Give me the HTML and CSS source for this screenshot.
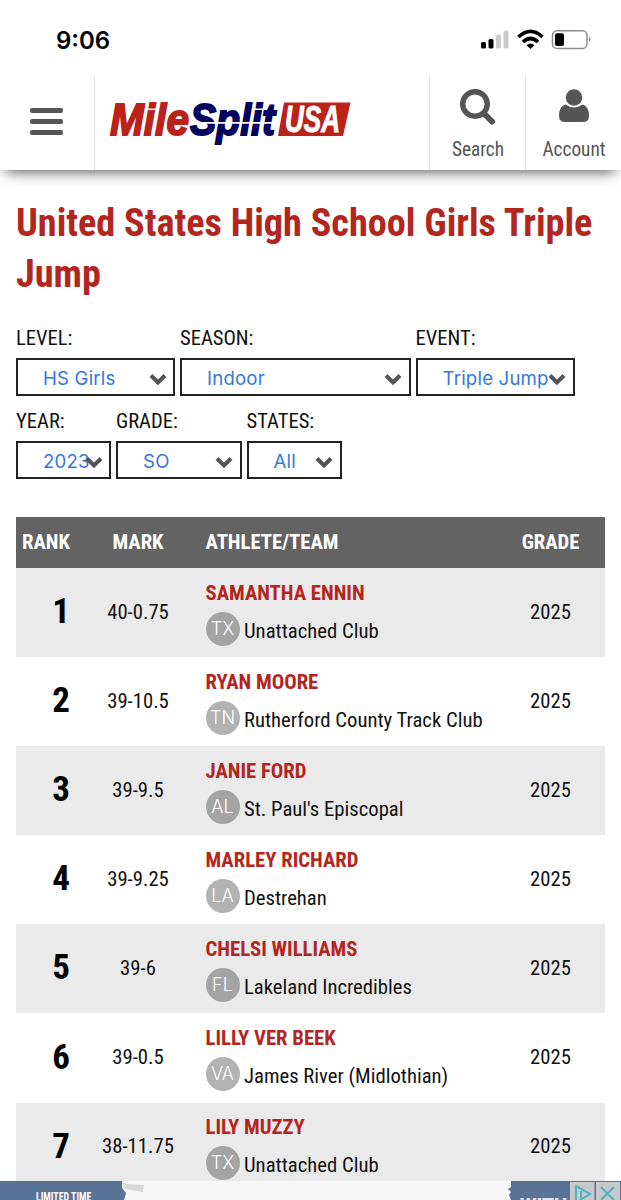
FILE: index.html
```html
<!DOCTYPE html>
<html lang="en">
<head>
<meta charset="utf-8">
<title>MileSplit USA</title>
<link rel="stylesheet" href="styles.css">
</head>
<body>
<header class="top">
  <div class="status">
    <span class="time">9:06</span>
    <svg class="status-icons" width="112" height="22" viewBox="0 0 112 22">
      <rect x="1" y="13" width="5" height="6.500" rx="1.5"/><rect x="8.500" y="10" width="5" height="9.500" rx="1.5"/>
      <rect x="16" y="5.500" width="5" height="14" rx="1.5" fill="#ccc"/><rect x="23.500" y="1.500" width="5" height="18" rx="1.500" fill="#ccc"/>
      <g fill="none" stroke="#000" stroke-width="3.600"><path d="M38.500 7.900Q50.500 -3.200 62.500 7.900"/><path d="M43 13Q50.500 6 58 13"/></g>
      <path d="M46.500 16.200Q50.500 12.600 54.500 16.200L50.500 20Z"/>
      <rect x="72.500" y="1.800" width="34.500" height="17.600" rx="4.500" fill="#fff" stroke="#8c8c8c" stroke-width="1.500"/>
      <rect x="75" y="4.200" width="9" height="12.800" rx="2"/>
      <path d="M109 7.500Q112 10.500 109 13.300Z" fill="#8c8c8c"/>
    </svg>
  </div>
  <nav class="nav">
    <button class="menu" aria-label="Menu"><i></i><i></i><i></i></button>
    <a class="brand">
      <svg width="245" height="50" viewBox="0 0 245 50">
        <g class="logo-text">
          <text x="1" y="38" textLength="79" lengthAdjust="spacingAndGlyphs" fill="#bb2219" stroke="#bb2219">Mile</text>
          <text x="81" y="38" textLength="85" lengthAdjust="spacingAndGlyphs" fill="#03005f" stroke="#03005f">Split</text>
        </g>
        <path d="M94 25.800H170" stroke="#fff" stroke-width="1.800"/>
        <path d="M175 5.500H241.500L234 39H169Z" fill="#bb2219"/>
        <text class="logo-usa" x="176" y="34.500" textLength="55" lengthAdjust="spacingAndGlyphs">USA</text>
      </svg>
    </a>
    <a class="tool">
      <svg width="38" height="38" viewBox="0 0 38 38" fill="none" stroke="#555"><circle cx="16" cy="15" r="12.300" stroke-width="5.400"/><path d="M25.500 25L33 32.500" stroke-width="6" stroke-linecap="round"/></svg>
      <span class="rc">Search</span>
    </a>
    <a class="tool">
      <svg width="38" height="38" viewBox="0 0 38 38" fill="#555"><circle cx="19" cy="8.500" r="8.300"/><path d="M10.500 15.500Q19 21.500 27.500 15.500Q34 17 34 27Q34 33 28 33H10Q4 33 4 27Q4 17 10.500 15.500Z"/></svg>
      <span class="rc">Account</span>
    </a>
  </nav>
</header>
<main>
  <h1><span class="rc">United States High School Girls Triple</span><br><span class="rc">Jump</span></h1>
  <form class="filters" id="filters"></form>
  <section class="table" id="table">
    <div class="row head"><span class="rank"><span class="rc">RANK</span></span><span class="mark"><span class="rc">MARK</span></span><span class="who"><span class="rc">ATHLETE/TEAM</span></span><span class="grade"><span class="rc">GRADE</span></span></div>
  </section>
</main>
<aside class="ad">
  <div class="ad-left"><span>LIMITED TIME</span></div>
  <svg class="ad-paper" width="389" height="19" viewBox="0 0 389 19"><path d="M0 0H389V6L386 8L389 11L387 14L389 19H2L4 12L0 7Z" fill="#f7f7f8"/><path d="M0 1L5 3L22 4L21 11L3 8Z" fill="#d8d8d8"/></svg>
  <div class="ad-right"><span>WITH</span></div>
  <svg class="ad-controls" width="51" height="19" viewBox="0 0 51 19"><rect y="1" width="24.500" height="18" fill="#c7c9cc"/><rect x="26" y="1" width="24" height="18" fill="#c7c9cc"/><g fill="none" stroke="#48b4c8" stroke-width="2"><path d="M6 19V5L20 13L10 19M11 10V17"/><path d="M31 6L44 19M44 6L31 19"/></g></svg>
</aside>
<script src="app.js"></script>
</body>
</html>
```
FILE: styles.css
```css
* { box-sizing: border-box; }
body { margin: 0; height: 1200px; overflow: hidden; background: #fff; color: #111; font-family: Roboto, sans-serif; position: relative; }
.rc { display: inline-block; font-family: "Roboto Condensed", Roboto, sans-serif; font-stretch: 75%; white-space: nowrap; }
.top { height: 170px; background: #fff; box-shadow: 0 8px 13px -6px rgba(0,0,0,.65); }
.status { height: 75px; display: flex; justify-content: space-between; padding: 25px 29px 0 56px; }
.time { font: 600 24px/31px Inter, sans-serif; color: #000; }
.status-icons { margin-top: 4px; }
.nav { height: 95px; display: flex; }
.menu { width: 95.500px; border: 0; border-right: 1.500px solid #e3e3e3; background: none; padding: 33px 0 0 30px; display: flex; flex-direction: column; gap: 5.700px; }
.menu i { width: 33px; height: 5.300px; border-radius: 2px; background: #555; flex: none; }
.brand { width: 334.500px; padding: 22px 0 0 13.500px; }
.brand svg { display: block; overflow: visible; }
.logo-text { font: italic bold 45px "Liberation Sans", sans-serif; stroke-width: 1.800px; }
.logo-usa { font: italic bold 36px "Liberation Sans", sans-serif; fill: #fff; stroke: #fff; stroke-width: 1px; }
.tool { width: 96px; border-left: 1.500px solid #e3e3e3; display: flex; flex-direction: column; align-items: center; padding: 14px 0 0 1px; font-size: 19.300px; line-height: 24px; color: #555; flex: none; }
.tool svg { margin-bottom: 11px; }
main { padding: 28px 16px 0; }
h1 { margin: 0; color: #b3261e; font-size: 38.250px; line-height: 51px; font-weight: 700; height: 126px; }
.filters { display: flex; flex-wrap: wrap; gap: 0 5px; height: 193px; align-content: flex-start; }
.field { height: 83px; font-size: 20.600px; }
.field .rc { display: block; line-height: 28px; height: 34px; }
.select { height: 38px; border: 2px solid #222; padding-left: 25px; font: 18.600px/36px Inter, sans-serif; letter-spacing: .2px; color: #3478dc; white-space: nowrap; position: relative; }
.select svg { position: absolute; right: 6.500px; top: 12.500px; }
.row { height: 89.100px; display: flex; align-items: center; font-size: 20.700px; }
.row .rc { position: relative; top: -1px; }
.row:nth-child(even) { background: #eaeaea; }
.head { height: 51px; background: #636363; color: #fff; font-weight: 700; }
.rank { width: 61px; padding-left: 6px; }
.row:not(.head) .rank { text-align: right; padding: 0 7px 0 0; font-size: 35px; font-weight: 700; color: #000; }
.mark { width: 122px; text-align: center; }
.who { width: 297px; padding-left: 6.500px; }
.grade { width: 109px; text-align: center; }
.name { color: #b3261e; font-weight: 700; line-height: 28px; padding-top: 9px; }
.team { display: flex; height: 47px; gap: 4.500px; line-height: 48px; }
.badge { width: 34px; height: 34px; border-radius: 50%; margin-top: 4px; background: #a4a4a4; color: #fff; text-align: center; font: 300 18px/34px Inter, sans-serif; }
.row:nth-child(odd) .badge { background: #b2b2b2; }
.ad { position: absolute; top: 1181px; left: 0; width: 621px; height: 19px; background: #587396; display: flex; overflow: hidden; }
.ad-left { width: 122px; padding: 9px 0 0 36px; color: #fff; font: 700 12px/14px "Roboto Condensed", Roboto; font-stretch: 75%; white-space: nowrap; }
.ad-left span { display: inline-block; transform: scaleX(.82); transform-origin: left; }
.ad-paper { flex: none; }
.ad-right { width: 59px; padding: 13px 0 0 9px; color: #e4e4e4; font: 900 19px/22px Roboto; }
.ad-controls { flex: none; }
```
FILE: app.js
```js
const chevron = '<svg width="18" height="13" viewBox="0 0 18 13"><path d="M2 2.500L9 9.500L16 2.500" fill="none" stroke="#555" stroke-width="4"/></svg>';
const fields = [["LEVEL:", "HS Girls", 159], ["SEASON:", "Indoor", 230.500], ["EVENT:", "Triple Jump", 159], ["YEAR:", "2023", 95], ["GRADE:", "SO", 125.500], ["STATES:", "All", 95]];
document.getElementById("filters").innerHTML = fields.map(([label, value, width]) =>
  `<div class="field" style="width:${width}px"><span class="rc">${label}</span><div class="select">${value}${chevron}</div></div>`).join("");
const athletes = [
  ["40-0.75", "SAMANTHA ENNIN", "TX", "Unattached Club"],
  ["39-10.5", "RYAN MOORE", "TN", "Rutherford County Track Club"],
  ["39-9.5", "JANIE FORD", "AL", "St. Paul's Episcopal"],
  ["39-9.25", "MARLEY RICHARD", "LA", "Destrehan"],
  ["39-6", "CHELSI WILLIAMS", "FL", "Lakeland Incredibles"],
  ["39-0.5", "LILLY VER BEEK", "VA", "James River (Midlothian)"],
  ["38-11.75", "LILY MUZZY", "TX", "Unattached Club"]
];
document.getElementById("table").insertAdjacentHTML("beforeend", athletes.map(([mark, name, state, team], i) =>
  `<div class="row"><span class="rank"><span class="rc">${i + 1}</span></span><span class="mark"><span class="rc">${mark}</span></span><div class="who"><div class="name"><span class="rc">${name}</span></div><div class="team"><span class="badge">${state}</span><span class="rc">${team}</span></div></div><span class="grade"><span class="rc">2025</span></span></div>`).join(""));
```
